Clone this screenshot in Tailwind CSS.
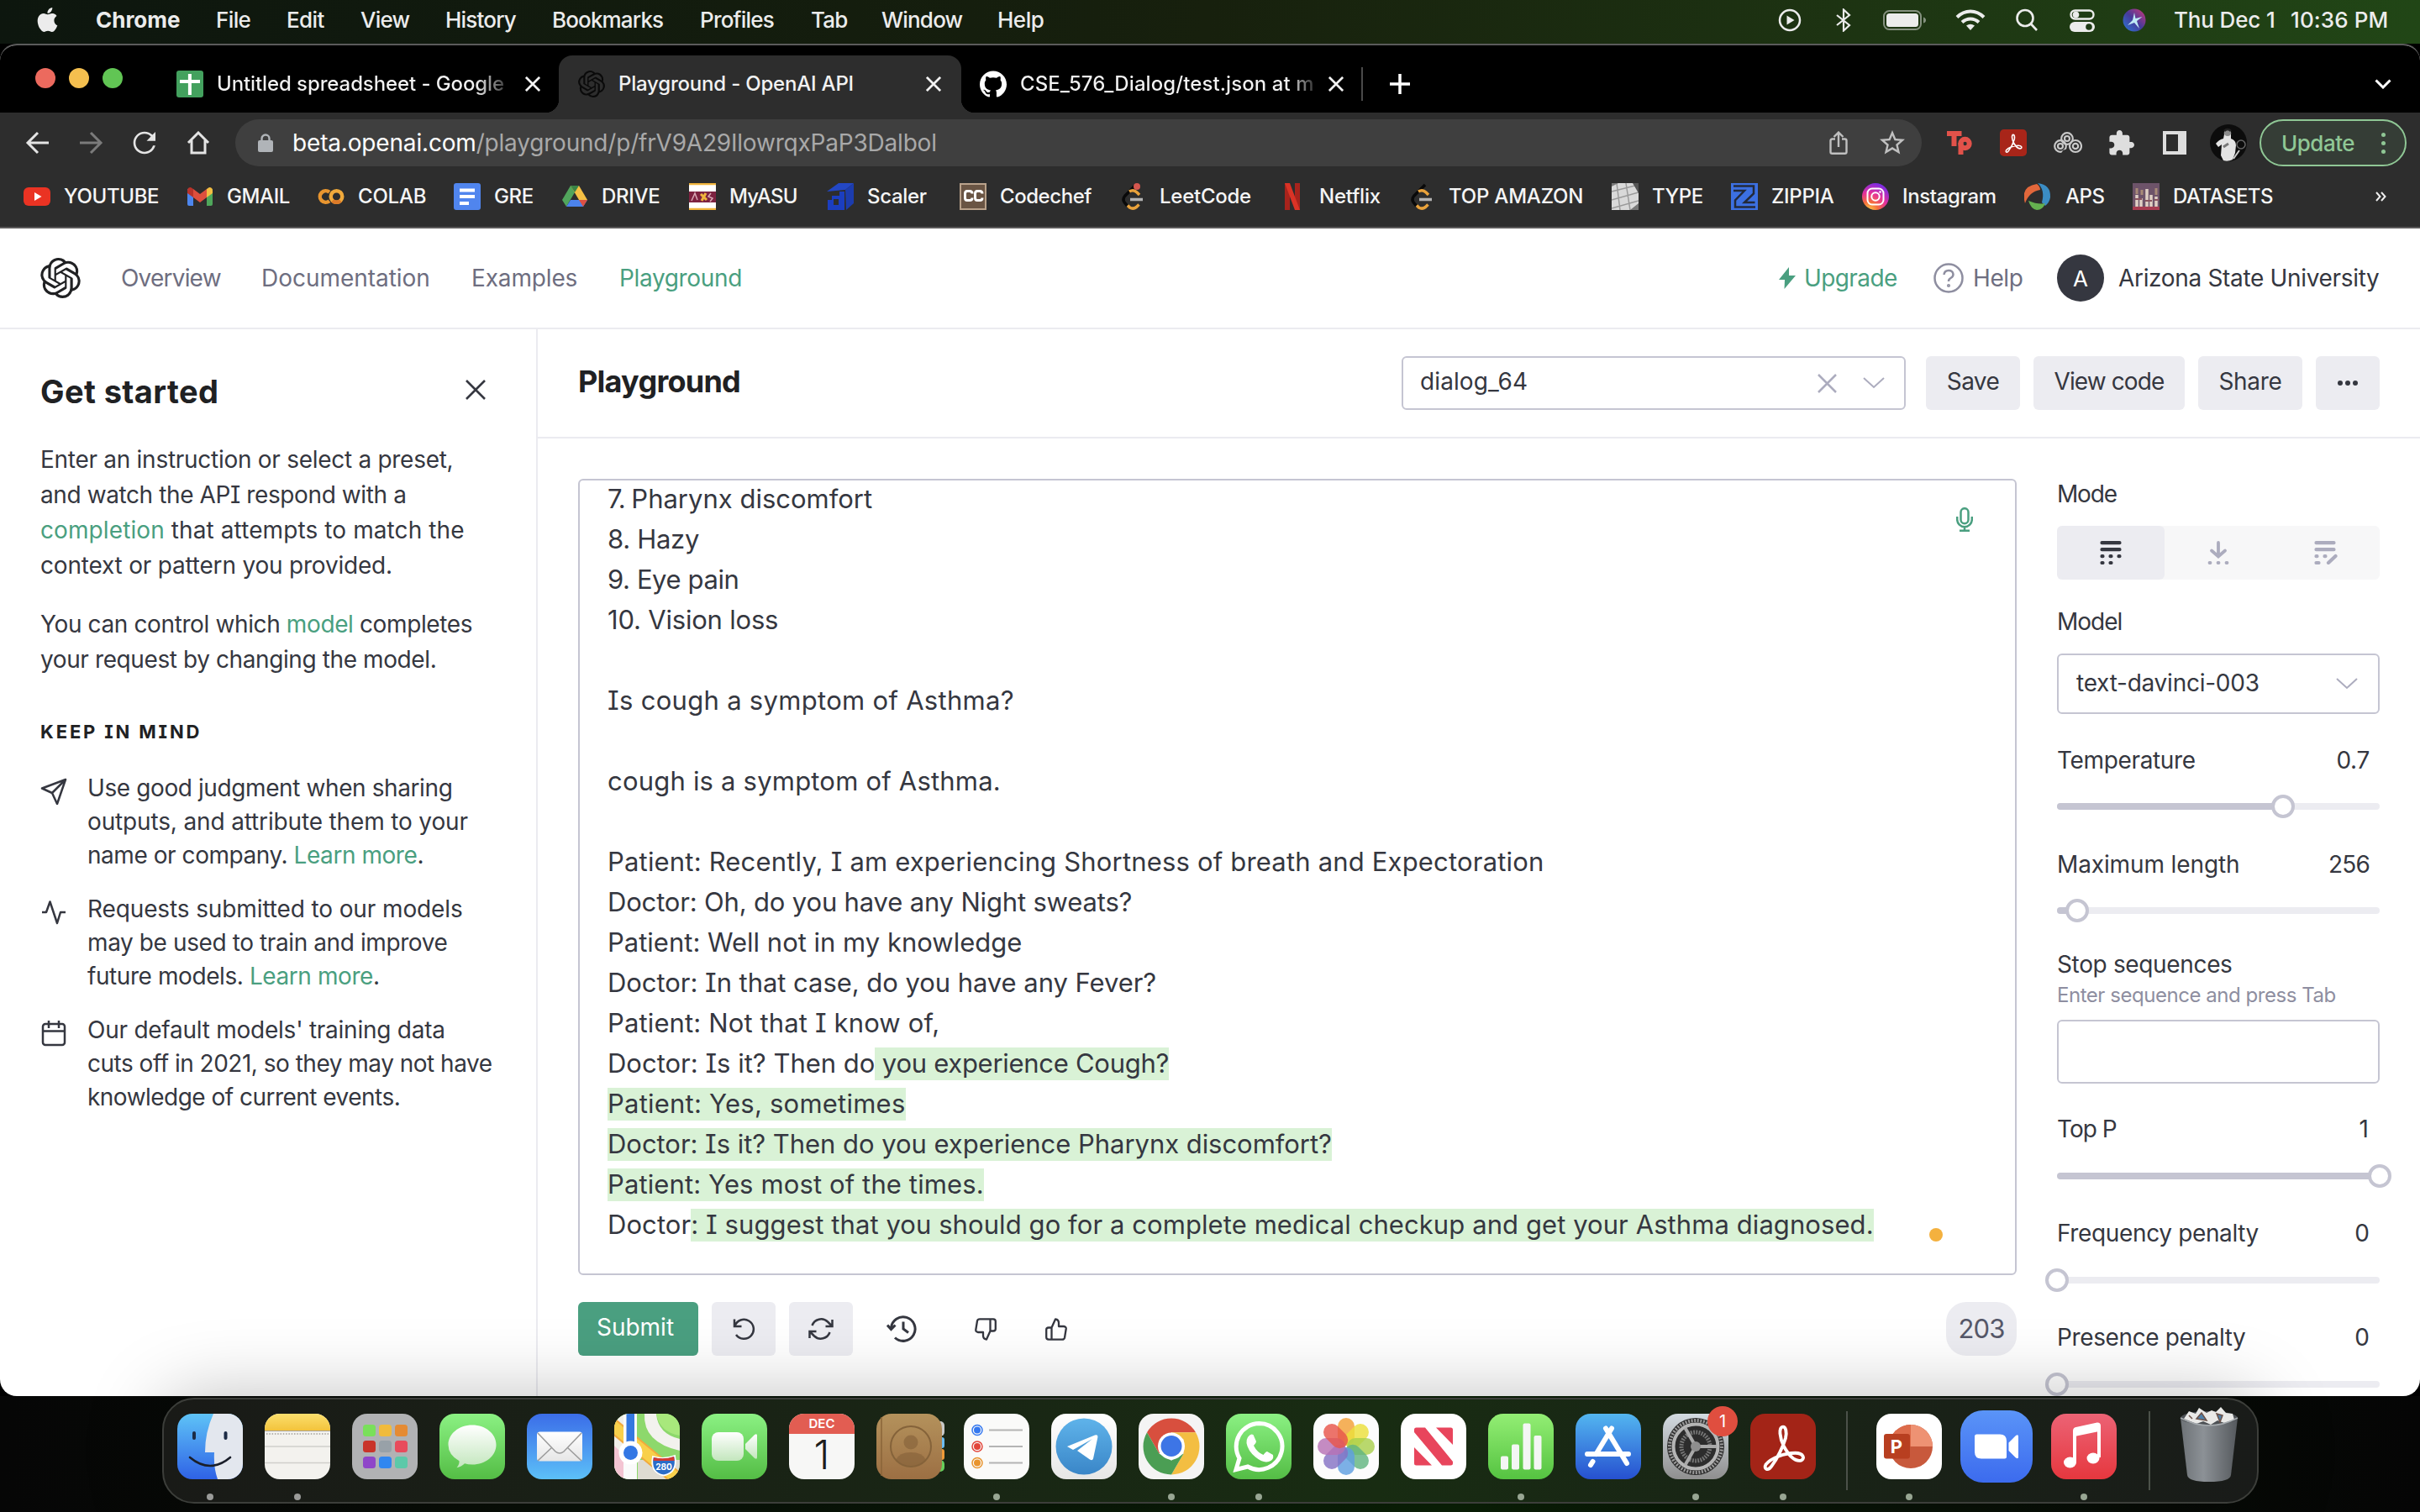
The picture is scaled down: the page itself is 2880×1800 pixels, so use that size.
<!DOCTYPE html>
<html lang="en">
<head>
<meta charset="utf-8">
<title>Playground - OpenAI API</title>
<script src="https://cdn.jsdelivr.net/npm/@tailwindcss/browser@4"></script>
<style>
/* upper-case i with serifs */
.serif-i { font-feature-settings: "cv08" 1; }
</style>
</head>
<body class="flex h-[1800px] w-[2880px] flex-col overflow-hidden bg-black font-['Inter',sans-serif] antialiased">

<!-- shared symbols -->
<svg class="hidden">
  <symbol id="openai" viewBox="0 0 24 24"><path d="M22.2819 9.8211a5.9847 5.9847 0 0 0-.5157-4.9108 6.0462 6.0462 0 0 0-6.5098-2.9A6.0651 6.0651 0 0 0 4.9807 4.1818a5.9847 5.9847 0 0 0-3.9977 2.9 6.0462 6.0462 0 0 0 .7427 7.0966 5.98 5.98 0 0 0 .511 4.9107 6.051 6.051 0 0 0 6.5146 2.9001A5.9847 5.9847 0 0 0 13.2599 24a6.0557 6.0557 0 0 0 5.7718-4.2058 5.9894 5.9894 0 0 0 3.9977-2.9001 6.0557 6.0557 0 0 0-.7475-7.0729zm-9.022 12.6081a4.4755 4.4755 0 0 1-2.8764-1.0408l.1419-.0804 4.7783-2.7582a.7948.7948 0 0 0 .3927-.6813v-6.7369l2.02 1.1686a.071.071 0 0 1 .038.052v5.5826a4.504 4.504 0 0 1-4.4945 4.4944zm-9.6607-4.1254a4.4708 4.4708 0 0 1-.5346-3.0137l.142.0852 4.783 2.7582a.7712.7712 0 0 0 .7806 0l5.8428-3.3685v2.3324a.0804.0804 0 0 1-.0332.0615L9.74 19.9502a4.4992 4.4992 0 0 1-6.1408-1.6464zM2.3408 7.8956a4.485 4.485 0 0 1 2.3655-1.9728V11.6a.7664.7664 0 0 0 .3879.6765l5.8144 3.3543-2.0201 1.1685a.0757.0757 0 0 1-.071 0l-4.8303-2.7865A4.504 4.504 0 0 1 2.3408 7.872zm16.5963 3.8558L13.1038 8.364 15.1192 7.2a.0757.0757 0 0 1 .071 0l4.8303 2.7913a4.4944 4.4944 0 0 1-.6765 8.1042v-5.6772a.79.79 0 0 0-.407-.667zm2.0107-3.0231l-.142-.0852-4.7735-2.7818a.7759.7759 0 0 0-.7854 0L9.409 9.2297V6.8974a.0662.0662 0 0 1 .0284-.0615l4.8303-2.7866a4.4992 4.4992 0 0 1 6.6802 4.66zM8.3065 12.863l-2.02-1.1638a.0804.0804 0 0 1-.038-.0567V6.0742a4.4992 4.4992 0 0 1 7.3757-3.4537l-.142.0805L8.704 5.459a.7948.7948 0 0 0-.3927.6813zm1.0976-2.3654l2.602-1.4998 2.6069 1.4998v2.9994l-2.5974 1.4997-2.6067-1.4997Z"/></symbol>
  <symbol id="x" viewBox="0 0 20 20"><path d="M1 1l18 18M19 1L1 19" fill="none" stroke="currentColor" stroke-width="3"/></symbol>
  <symbol id="down" viewBox="0 0 26 14"><path d="M1 1l12 11L25 1" fill="none" stroke="currentColor" stroke-width="2"/></symbol>
  <symbol id="leet" viewBox="0 0 32 32"><path d="M20 2L6.500 15.500q-3 4 0 8l3 3.500" fill="none" stroke="#090909" stroke-width="3.500"/><path d="M10 26.500l2.500 2.500q4 2.500 8-.5l3-3M12 10q5-3 9 1l3 3" fill="none" stroke="#e9a23b" stroke-width="3.500"/><path d="M13 19.500h15" stroke="#b3b3b3" stroke-width="3.500"/></symbol>
  <symbol id="acro" viewBox="0 0 80 80"><path d="M40 16c-6 0-4 14 1 24 5 9 13 19 21 17 5-2 3-9-7-9-13 0-30 6-36 14-3 5 2 9 7 2 7-9 14-24 17-34 2-8 0-14-3-14z" fill="none" stroke="#fff" stroke-width="4"/></symbol>
</svg>

<!-- macOS menu bar -->
<header class="flex h-[52px] shrink-0 items-center bg-linear-to-r from-[#0d160e] via-[#17200d] via-50% to-[#214616] pb-[5px] text-[26px] font-medium text-[#ececec]">
  <svg class="ml-[42px] mr-[43px] h-[31px] w-[29px] shrink-0" viewBox="0 0 24 24" fill="#ececec"><path d="M12.152 6.896c-.948 0-2.415-1.078-3.96-1.04-2.04.027-3.91 1.183-4.961 3.014-2.117 3.675-.546 9.103 1.519 12.09 1.013 1.454 2.208 3.09 3.792 3.039 1.52-.065 2.09-.987 3.935-.987 1.831 0 2.35.987 3.96.948 1.637-.026 2.676-1.48 3.676-2.948 1.156-1.688 1.636-3.325 1.662-3.415-.039-.013-3.182-1.221-3.22-4.857-.026-3.04 2.48-4.494 2.597-4.559-1.429-2.09-3.623-2.324-4.39-2.376-2-.156-3.675 1.09-4.61 1.09zM15.53 3.83c.843-1.012 1.4-2.427 1.245-3.83-1.207.052-2.662.805-3.532 1.818-.78.896-1.454 2.338-1.273 3.714 1.338.104 2.715-.688 3.559-1.701"/></svg>
  <span class="w-[143px] font-bold">Chrome</span>
  <span class="w-[84px] tracking-[-0.6px]">File</span>
  <span class="w-[88px] tracking-[-0.6px]">Edit</span>
  <span class="w-[101px] tracking-[-0.8px]">View</span>
  <span class="w-[127px] tracking-[-0.8px]">History</span>
  <span class="w-[176px] tracking-[-0.85px]">Bookmarks</span>
  <span class="w-[132px] tracking-[-0.8px]">Profiles</span>
  <span class="w-[84px] tracking-[-0.8px]">Tab</span>
  <span class="w-[138px] tracking-[-0.8px]">Window</span>
  <span class="tracking-[-0.5px]">Help</span>
  <div class="ml-auto flex items-center">
    <svg class="h-7 w-7" viewBox="0 0 28 28" fill="none" stroke="#ececec" stroke-width="2.500"><circle cx="14" cy="14" r="12"/><path d="M10.500 8.500v11l9-5.500z" fill="#ececec" stroke="none"/></svg>
    <svg class="ml-[40px] h-7 w-5" viewBox="0 0 20 28" fill="none" stroke="#ececec" stroke-width="2.200"><path d="M2 8l15 12-7 6.500v-25l7 6.500L2 20"/></svg>
    <svg class="ml-[37px] h-6 w-[52px]" viewBox="0 0 52 24"><rect x="1" y="1" width="44" height="22" rx="6.500" fill="none" stroke="#ececec" stroke-opacity=".5" stroke-width="2"/><rect x="4" y="4" width="38" height="16" rx="3.500" fill="#ececec"/><path d="M48 8.500q3 1 3 3.500t-3 3.500z" fill="#ececec" fill-opacity=".5"/></svg>
    <svg class="ml-[34px] h-[26px] w-9" viewBox="0 0 36 26" fill="none" stroke="#ececec" stroke-width="4"><path d="M2 9.500q7-7 16-7t16 7M8 15.500q4.500-4 10-4t10 4"/><path d="M18 25l-5-5.500q5-3.500 10 0z" fill="#ececec" stroke="none"/></svg>
    <svg class="ml-[35px] h-7 w-7" viewBox="0 0 28 28" fill="none" stroke="#ececec" stroke-width="2.600"><circle cx="12" cy="11.500" r="9.500"/><path d="M19 18.500l7 7.500"/></svg>
    <svg class="ml-[37px] h-7 w-[30px]" viewBox="0 0 30 28"><rect x="1.500" y="2.500" width="27" height="10" rx="5" fill="none" stroke="#ececec" stroke-width="2.400"/><circle cx="7.500" cy="7.500" r="3.800" fill="#ececec"/><rect x="0" y="16" width="30" height="12" rx="6" fill="#ececec"/><circle cx="23" cy="22" r="3.800" fill="#1e3a15"/></svg>
    <svg class="ml-[33px] h-7 w-7" viewBox="0 0 28 28"><defs><linearGradient id="siri" x1="0" y1="1" x2="1" y2="0"><stop offset="0" stop-color="#2c7bd8"/><stop offset=".5" stop-color="#463a9a"/><stop offset="1" stop-color="#d0387a"/></linearGradient></defs><circle cx="14" cy="14" r="13.500" fill="url(#siri)"/><path d="M14 5l1.500 7 8-2-6.500 5 3 9-6-7-8 3 6-6z" fill="#bfe9f5"/></svg>
    <span class="ml-[33px] w-[139px] tracking-[-0.15px]">Thu Dec 1</span>
    <span class="w-[154px] tracking-[0.1px]">10:36 PM</span>
  </div>
</header>

<!-- Chrome window -->
<div class="flex h-[1610px] w-full shrink-0 flex-col overflow-hidden rounded-[20px] border-t-2 border-[#5b5b5b] bg-white">

  <!-- tab strip -->
  <div class="flex h-[80px] shrink-0 items-end bg-black text-[24px] font-medium text-[#f2f2f2]">
    <div class="flex h-[68px] w-[665px] items-center pl-[42px]">
      <div class="-mt-[14px] flex gap-4"><i class="size-6 rounded-full bg-[#ec6a5e]"></i><i class="size-6 rounded-full bg-[#f4bf4f]"></i><i class="size-6 rounded-full bg-[#61c554]"></i></div>
      <svg class="ml-[64px] size-8" viewBox="0 0 32 32"><rect width="32" height="32" rx="3" fill="#43a15e"/><path d="M15.900 4v25M4 13h24" stroke="#fff" stroke-width="4"/></svg>
      <span class="ml-4 w-[350px] overflow-hidden whitespace-nowrap bg-linear-to-r from-[#f2f2f2] from-88% to-[#f2f2f2]/10 to-100% bg-clip-text tracking-[-0.1px] text-transparent">Untitled spreadsheet - Google</span>
      <svg class="ml-[17px] size-[18px]"><use href="#x"/></svg>
    </div>
    <div class="relative flex h-[68px] w-[479px] items-center rounded-t-[16px] bg-[#2d2d2d] pl-[23px]">
      <i class="absolute bottom-0 -left-4 size-4 bg-[radial-gradient(circle_at_0_0,black_16px,#2d2d2d_16.5px)]"></i>
      <i class="absolute -right-4 bottom-0 size-4 bg-[radial-gradient(circle_at_100%_0,black_16px,#2d2d2d_16.5px)]"></i>
      <svg class="size-8" fill="#0a0a0a"><use href="#openai"/></svg>
      <span class="ml-4 w-[366px] tracking-[-0.2px]">Playground - OpenAI API</span>
      <svg class="size-[18px]"><use href="#x"/></svg>
    </div>
    <div class="flex h-[68px] flex-1 items-center pl-[22px]">
      <svg class="size-8" viewBox="0 0 24 24" fill="#fff"><path d="M12 .297c-6.63 0-12 5.373-12 12 0 5.303 3.438 9.8 8.205 11.385.6.113.82-.258.82-.577 0-.285-.01-1.04-.015-2.04-3.338.724-4.042-1.61-4.042-1.61C4.422 18.07 3.633 17.7 3.633 17.7c-1.087-.744.084-.729.084-.729 1.205.084 1.838 1.236 1.838 1.236 1.07 1.835 2.809 1.305 3.495.998.108-.776.417-1.305.76-1.605-2.665-.3-5.466-1.332-5.466-5.93 0-1.31.465-2.38 1.235-3.22-.135-.303-.54-1.523.105-3.176 0 0 1.005-.322 3.3 1.23.96-.267 1.98-.399 3-.405 1.02.006 2.04.138 3 .405 2.28-1.552 3.285-1.23 3.285-1.23.645 1.653.24 2.873.12 3.176.765.84 1.23 1.91 1.23 3.22 0 4.61-2.805 5.625-5.475 5.92.42.36.81 1.096.81 2.22 0 1.606-.015 2.896-.015 3.286 0 .315.21.69.825.57C20.565 22.092 24 17.592 24 12.297c0-6.627-5.373-12-12-12"/></svg>
      <span class="ml-4 w-[350px] overflow-hidden whitespace-nowrap bg-linear-to-r from-[#f2f2f2] from-91% to-[#f2f2f2]/20 to-100% bg-clip-text tracking-[0.08px] text-transparent">CSE_576_Dialog/test.json at m</span>
      <svg class="ml-[17px] size-[18px]"><use href="#x"/></svg>
      <i class="ml-[21px] h-10 w-[2px] bg-[#4a4a4a]"></i>
      <svg class="ml-8 size-6" viewBox="0 0 24 24" stroke="#fff" stroke-width="3.500"><path d="M12 0v24M0 12h24"/></svg>
      <svg class="ml-auto mr-[34px] h-3 w-5" viewBox="0 0 20 12" fill="none" stroke="#fff" stroke-width="3"><path d="M1.500 1.500L10 10l8.500-8.500"/></svg>
    </div>
  </div>

  <!-- toolbar -->
  <div class="flex h-[72px] shrink-0 items-center bg-[#2d2d2d] text-[28px]">
    <svg class="ml-[30px] h-7 w-7" viewBox="0 0 28 28" fill="none" stroke="#e4e4e4" stroke-width="3"><path d="M28 14H3M15 2L3 14l12 12"/></svg>
    <svg class="ml-[37px] h-7 w-7" viewBox="0 0 28 28" fill="none" stroke="#7b7b7b" stroke-width="3"><path d="M0 14h25M13 2l12 12-12 12"/></svg>
    <svg class="ml-[29px] size-10" viewBox="0 0 24 24" fill="#e4e4e4"><path d="M17.650 6.350C16.200 4.900 14.210 4 12 4c-4.420 0-7.990 3.580-7.990 8s3.570 8 7.990 8c3.730 0 6.840-2.550 7.730-6h-1.700c-.82 2.700-3.240 4.400-6.030 4.400-3.500 0-6.400-2.850-6.400-6.400s2.900-6.400 6.400-6.400c1.760 0 3.340.75 4.520 1.900L13.500 10.600h6.300V4.200l-2.150 2.150z"/></svg>
    <svg class="ml-[30px] h-7 w-7" viewBox="0 0 28 28" fill="none" stroke="#e4e4e4" stroke-width="3"><path d="M2 14L14 2l12 12M6 11v15h16V11"/></svg>
    <div class="ml-[30px] flex h-14 w-[2007px] items-center rounded-full bg-[#3f3f3f]">
      <svg class="ml-[27px] h-[22px] w-[18px]" viewBox="0 0 18 22"><path d="M4.500 9V6a4.500 4.500 0 0 1 9 0v3" fill="none" stroke="#b0b4b8" stroke-width="2.400"/><rect y="8" width="18" height="14" rx="2" fill="#b0b4b8"/></svg>
      <span class="ml-[23px] tracking-[-0.17px] text-white">beta.openai.com</span><span class="tracking-[-0.2px] text-[#a9a9a9]">/playground/p/frV9A29IlowrqxPaP3Dalbol</span>
      <svg class="ml-auto h-7 w-[22px]" viewBox="0 0 22 28" fill="none" stroke="#c0c0c0" stroke-width="2.400"><path d="M7 9.500H3.500q-2 0-2 2V25q0 1.800 2 1.800h15q2 0 2-1.800V11.500q0-2-2-2H15M11 19V2M5.500 7L11 1.600 16.500 7"/></svg>
      <svg class="ml-[35px] mr-[17px] size-[36px]" viewBox="0 0 24 24" fill="#c0c0c0"><path d="M22 9.240l-7.190-.62L12 2 9.190 8.630 2 9.240l5.460 4.730L5.820 21 12 17.270 18.180 21l-1.630-7.030L22 9.240zM12 15.400l-3.760 2.270 1-4.280-3.320-2.880 4.380-.38L12 6.100l1.710 4.040 4.380.38-3.320 2.880 1 4.280L12 15.400z"/></svg>
    </div>
    <svg class="ml-[30px] h-7 w-[30px]" viewBox="0 0 30 28" fill="none" stroke="#e2524a"><path d="M0 3h17.500M8.500 0v18" stroke-width="6"/><path d="M16.500 28V14" stroke-width="6"/><circle cx="21.500" cy="15" r="5.200" stroke-width="6"/></svg>
    <svg class="ml-[33px] size-8" viewBox="0 0 80 80"><rect width="80" height="80" rx="12" fill="#a82519"/><use href="#acro"/></svg>
    <svg class="ml-8 h-[26px] w-[34px]" viewBox="0 0 34 26" fill="none" stroke="#c9c9c9" stroke-width="2.200"><circle cx="16" cy="8" r="6.800"/><circle cx="16" cy="8" r="3"/><g clip-path="url(#rings)"><circle cx="8" cy="17" r="6.800"/><circle cx="8" cy="17" r="3"/></g><circle cx="26" cy="17" r="7"/><circle cx="26" cy="17" r="3.200"/></svg>
    <svg class="ml-[31px] size-[31px]" viewBox="1 1 22 22" fill="#dedede"><path d="M20.500 11H19V7c0-1.100-.9-2-2-2h-4V3.500C13 2.120 11.880 1 10.500 1S8 2.120 8 3.500V5H4c-1.100 0-1.990.9-1.990 2v3.800H3.500c1.490 0 2.700 1.210 2.700 2.700s-1.210 2.700-2.700 2.700H2V20c0 1.100.9 2 2 2h3.800v-1.500c0-1.490 1.210-2.700 2.700-2.700 1.490 0 2.700 1.210 2.700 2.700V22H17c1.100 0 2-.9 2-2v-4h1.500c1.380 0 2.500-1.120 2.500-2.500S21.880 11 20.500 11z"/></svg>
    <i class="ml-[34px] size-7 border-4 border-r-[10px] border-[#dedede]"></i>
    <svg class="ml-7 size-11" viewBox="0 0 44 44"><circle cx="22" cy="22" r="22" fill="#0c0c0c"/><path d="M7 23q4-5 9-6l1-5q-1-6 4-6t4 6v5q6 2 6 8l-1 9-3 8q-6 3-11 1l-3-6 1-13-4 3z" fill="#e3e3e3"/><circle cx="21" cy="10" r="4" fill="#8b8b8b"/><path d="M17 8q4-4 8 0" stroke="#222" stroke-width="2.500" fill="none"/><path d="M16 27l6-4" stroke="#777" stroke-width="3"/><circle cx="37" cy="24" r="5" fill="none" stroke="#666" stroke-width="1.500"/><path d="M35 31l-7 10" stroke="#ccc" stroke-width="2"/></svg>
    <div class="ml-[15px] flex h-14 w-[175px] items-center rounded-full border-[2.500px] border-[#8fc795] bg-[#353d36] pl-[24px] text-[26px] font-medium tracking-[-0.5px] text-[#8fc795]">Update
      <span class="ml-auto mr-[23px] flex flex-col gap-[5px]"><i class="size-[5px] rounded-full bg-[#8fc795]"></i><i class="size-[5px] rounded-full bg-[#8fc795]"></i><i class="size-[5px] rounded-full bg-[#8fc795]"></i></span>
    </div>
  </div>

  <!-- bookmarks bar -->
  <div class="flex h-[66px] shrink-0 items-center whitespace-nowrap border-b-2 border-[#5b595a] bg-[#2d2d2d] pb-2 pl-7 text-[24px] font-medium text-[#f5f5f5]">
    <div class="flex w-[194px] items-center gap-4"><svg class="size-8" viewBox="0 0 32 32"><rect y="5" width="32" height="22" rx="6" fill="#ea3323"/><path d="M13 11v10l8.500-5z" fill="#fff"/></svg><span class="tracking-[-0.35px]">YOUTUBE</span></div>
    <div class="flex w-[156px] items-center gap-4"><svg class="size-8" viewBox="0 0 32 32"><path d="M1 7h7v20H3q-2 0-2-2z" fill="#4d86ee"/><path d="M24 7h7v18q0 2-2 2h-5z" fill="#4fa75b"/><path d="M24 7l3-2q4 0 4 4v3l-7 5z" fill="#f3bd42"/><path d="M1 9q0-4 4-4l3 2v10l-7-5z" fill="#b8332a"/><path d="M8 7l8 6 8-6v10l-8 6-8-6z" fill="#dd4f3e"/></svg><span class="tracking-[-0.4px]">GMAIL</span></div>
    <div class="flex w-[162px] items-center gap-4"><svg class="size-8" viewBox="0 0 32 32" fill="none" stroke-width="4.500"><path d="M14 10.800a6.800 6.800 0 1 0 0 10.400" stroke="#e8952f"/><circle cx="22.500" cy="16" r="6.800" stroke="#f0a93b"/><path d="M17.700 20.800a6.800 6.800 0 0 0 9.600 0" stroke="#dd7a28"/></svg><span class="tracking-[-0.2px]">COLAB</span></div>
    <div class="flex w-[128px] items-center gap-4"><svg class="size-8" viewBox="0 0 32 32"><rect width="32" height="32" rx="3" fill="#5085ee"/><path d="M7 8.500h18M7 16h18M7 24h11" stroke="#fff" stroke-width="4"/></svg><span class="tracking-[-0.32px]">GRE</span></div>
    <div class="flex w-[152px] items-center gap-4"><svg class="size-8" viewBox="0 0 32 32"><path d="M11 3L1 20l5 8 10-17z" fill="#51a55c"/><path d="M11 3h10l10 17H21z" fill="#f5c044"/><path d="M11 3h10l-5 8z" fill="#3a8446"/><path d="M6 28l5-8h20l-5 8z" fill="#4c83ec"/><path d="M21 20h10l-5 8z" fill="#dd5043"/></svg><span class="tracking-[-0.3px]">DRIVE</span></div>
    <div class="flex w-[164px] items-center gap-4"><svg class="size-8" viewBox="0 0 32 32"><rect width="32" height="32" fill="#fff"/><path d="M0 1h32M0 31h32" stroke="#f0b43c" stroke-width="2.500"/><rect y="10" width="32" height="13" fill="#7d2240"/><path d="M3 21l4-9 3 8M26 12l-3 4 5 2-3 4" fill="none" stroke="#d8a8b5" stroke-width="1.500"/><path d="M14 13l7 7M20 12l-5 9" stroke="#f0b43c" stroke-width="3"/></svg><span class="tracking-[-0.7px]">MyASU</span></div>
    <div class="flex w-[158px] items-center gap-4"><svg class="size-8" viewBox="0 0 32 32"><path d="M0 10L14 0h18L22 8z" fill="#2347c4"/><path d="M22 8L32 0v24l-9 8z" fill="#1c3cae"/><path d="M1 10h20v22H1z" fill="#1b3ec0"/><path d="M1 10h14v5H6v5H1z" fill="#2d2d2d"/><path d="M8 19h6v7H8z" fill="#2d2d2d"/></svg><span class="tracking-[-0.3px]">Scaler</span></div>
    <div class="flex w-[190px] items-center gap-4"><svg class="size-8" viewBox="0 0 32 32"><rect x="1" y="1" width="30" height="30" fill="#6a5544" stroke="#b9a28b" stroke-width="2"/><path d="M15 12.500q0-3-3-3H9q-2.500 0-2.500 3v5q0 3 2.500 3h3q3 0 3-3M27 12.500q0-3-3-3h-3q-2.500 0-2.500 3v5q0 3 2.500 3h3q3 0 3-3" fill="none" stroke="#fff" stroke-width="3"/></svg><span class="tracking-[-0.44px]">Codechef</span></div>
    <div class="flex w-[190px] items-center gap-4"><svg class="size-8" viewBox="0 0 32 32"><use href="#leet"/><circle cx="21" cy="4" r="4" fill="#d4574f"/></svg><span class="tracking-[-0.25px]">LeetCode</span></div>
    <div class="flex w-[154px] items-center gap-4"><svg class="size-8" viewBox="0 0 32 32"><path d="M7 0h6v32H7zM19 0h6v32h-6z" fill="#a8231c"/><path d="M7 0h6l12 32h-6z" fill="#da3326"/></svg><span class="tracking-[-0.2px]">Netflix</span></div>
    <div class="flex w-[242px] items-center gap-4"><svg class="size-8"><use href="#leet"/></svg><span class="tracking-[-0.2px]">TOP AMAZON</span></div>
    <div class="flex w-[142px] items-center gap-4"><svg class="size-8" viewBox="0 0 32 32"><rect width="32" height="32" fill="#d9d9d9"/><path d="M0 10L32 2M0 20l32-9M0 30l32-9M6 0l4 32M17 0l5 32" stroke="#9a9a9a" stroke-width="1.500"/><path d="M25 0h7v12z" fill="#555"/><path d="M0 4L8 0H0zM22 32l10-8v8z" fill="#777"/></svg><span class="tracking-[-0.5px]">TYPE</span></div>
    <div class="flex w-[156px] items-center gap-4"><svg class="size-8" viewBox="0 0 32 32"><rect width="32" height="32" fill="#3c70e2"/><path d="M3 3.500h24v9L16 23h12.500M29 28.500H5v-8L16 9H3" fill="none" stroke="#232a3a" stroke-width="2.500"/></svg><span class="tracking-[-0.3px]">ZIPPIA</span></div>
    <div class="flex w-[193px] items-center gap-4"><svg class="size-8" viewBox="0 0 32 32"><defs><radialGradient id="ig" cx=".25" cy="1.050" r="1.150"><stop offset="0" stop-color="#fbd84e"/><stop offset=".3" stop-color="#f5703b"/><stop offset=".6" stop-color="#e5309a"/><stop offset="1" stop-color="#6a2cf0"/></radialGradient></defs><circle cx="16" cy="16" r="16" fill="url(#ig)"/><g fill="none" stroke="#fff" stroke-width="2"><rect x="6.500" y="6.500" width="19" height="19" rx="5.500"/><circle cx="16" cy="16" r="4.700"/></g><circle cx="21.500" cy="10.500" r="1.300" fill="#fff"/></svg><span class="tracking-[-0.35px]">Instagram</span></div>
    <div class="flex w-[129px] items-center gap-[17px]"><svg class="size-8" viewBox="0 0 32 32"><path d="M1 24Q-5 4 15 1q4 3 4 7Q6 10 1 24z" fill="#e2673b"/><path d="M16 0q16 2 15 17-1 6-6 10l-4-4Q25 8 16 0z" fill="#3b8dc4"/><path d="M5 21q12 5 20 3-3 8-10 8-7-1-10-11z" fill="#65b04f"/></svg><span class="tracking-[-0.5px]">APS</span></div>
    <div class="flex items-center gap-4"><svg class="size-8" viewBox="0 0 32 32"><rect width="32" height="32" fill="#6d5369"/><path d="M0 28h32v4H0z" fill="#a83c52"/><path d="M5 14v14M10 18v10M17 7v21M22 14v14M28 16v12" stroke="#e0cfc4" stroke-width="3.500"/><path d="M5 6v7M28 6v8M11 8v6" stroke="#a88a78" stroke-width="3"/><path d="M3 19h8M15 21h8M26 20h5" stroke="#89545f" stroke-width="2"/></svg><span class="tracking-[-0.5px]">DATASETS</span></div>
    <svg class="ml-auto mr-[40px] h-3 w-[13px]" viewBox="0 0 13 12" fill="none" stroke="#eee" stroke-width="2"><path d="M1 1l4.500 5L1 11M7 1l4.500 5L7 11"/></svg>
  </div>

  <!-- site header -->
  <nav class="flex h-[120px] shrink-0 items-center border-b-2 border-[#ebebf0] pl-12 text-[28px] text-[#6e6e80]">
    <svg class="mr-[48px] size-[48px] text-[#202123]" fill="currentColor"><use href="#openai"/></svg>
    <span class="w-[167px] tracking-[-0.8px]">Overview</span>
    <span class="w-[250px] tracking-[-0.03px]">Documentation</span>
    <span class="w-[176px] tracking-[-0.15px]">Examples</span>
    <span class="tracking-[-0.35px] text-[#4a9f80]">Playground</span>
    <div class="ml-auto flex items-center">
      <svg class="h-[26px] w-5" viewBox="0 0 20 26" fill="#4a9f80"><path d="M12 0L0 15h7L6.500 26 20 10h-8z"/></svg>
      <span class="ml-[10px] w-[154px] tracking-[-0.6px] text-[#4a9f80]">Upgrade</span>
      <svg class="size-9" viewBox="0 0 36 36" fill="none" stroke="#8e8ea0" stroke-width="2.500"><circle cx="18" cy="18" r="16.500"/><path d="M12.500 14q.5-5 5.500-5t5.500 4.500q0 3-3 4.500-2.500 1.200-2.500 4"/><circle cx="18" cy="27" r=".8"/></svg>
      <span class="ml-[11px] w-[100px] tracking-[-0.4px]">Help</span>
      <span class="flex size-14 items-center justify-center rounded-full bg-[#353740] text-[26px] text-white">A</span>
      <span class="ml-[17px] w-[359px] tracking-[-0.33px] text-[#353740]">Arizona State University</span>
    </div>
  </nav>

  <div class="serif-i flex min-h-0 flex-1 text-[#353740]">
    <!-- get started -->
    <aside class="w-[640px] shrink-0 border-r-2 border-[#ebebf0] pl-12 pt-[50px] text-[28px]">
      <div class="flex h-12 items-center justify-between pr-[60px]">
        <h2 class="text-[38px] font-bold tracking-[0.4px] text-[#202123]">Get started</h2>
        <svg class="-mt-1 size-6" viewBox="0 0 24 24" stroke="#353740" stroke-width="2.600"><path d="M1 1l22 22M23 1L1 23"/></svg>
      </div>
      <p class="mt-9 whitespace-nowrap leading-[42px]">
        <span class="block tracking-[-0.28px]">Enter an instruction or select a preset,</span>
        <span class="block tracking-[-0.4px]">and watch the API respond with a</span>
        <span class="block tracking-[0.1px]"><a class="text-[#4a9f80]">completion</a> that attempts to match the</span>
        <span class="block tracking-[-0.2px]">context or pattern you provided.</span>
      </p>
      <p class="mt-7 whitespace-nowrap leading-[42px]">
        <span class="block tracking-[-0.38px]">You can control which <a class="text-[#4a9f80]">model</a> completes</span>
        <span class="block tracking-[-0.4px]">your request by changing the model.</span>
      </p>
      <h3 class="mt-[49px] text-[22px] font-bold leading-8 tracking-[2.850px] text-[#202123]">KEEP IN MIND</h3>
      <ul class="mt-[31px] flex flex-col gap-6 whitespace-nowrap leading-10">
        <li class="flex gap-6">
          <svg class="mt-2 size-8" viewBox="0 0 32 32" fill="none" stroke="#353740" stroke-width="2.500" stroke-linejoin="round"><path d="M30 2L2 12.500 14 18l6 13zM30 2L14 18"/></svg>
          <p><span class="block tracking-[-0.4px]">Use good judgment when sharing</span><span class="block tracking-[-0.15px]">outputs, and attribute them to your</span><span class="block tracking-[-0.45px]">name or company. <a class="text-[#4a9f80]">Learn more</a>.</span></p>
        </li>
        <li class="flex gap-6">
          <svg class="mt-2 size-8" viewBox="0 0 32 32" fill="none" stroke="#353740" stroke-width="2.500" stroke-linejoin="round"><path d="M2 16h5l4.500-12.500L20 29l4-13h6"/></svg>
          <p><span class="block tracking-[-0.12px]">Requests submitted to our models</span><span class="block tracking-[-0.4px]">may be used to train and improve</span><span class="block tracking-[-0.42px]">future models. <a class="text-[#4a9f80]">Learn more</a>.</span></p>
        </li>
        <li class="flex gap-6">
          <svg class="mt-2 size-8" viewBox="0 0 32 32" fill="none" stroke="#353740" stroke-width="2.500" stroke-linejoin="round"><rect x="3" y="5" width="26" height="25" rx="3"/><path d="M3 13.500h26M10 1v9M22 1v9"/></svg>
          <p><span class="block tracking-[-0.25px]">Our default models' training data</span><span class="block tracking-[-0.5px]">cuts off in 2021, so they may not have</span><span class="block tracking-[-0.52px]">knowledge of current events.</span></p>
        </li>
      </ul>
    </aside>

    <main class="flex min-w-0 flex-1 flex-col">
      <div class="flex h-[130px] shrink-0 items-center border-b-2 border-[#ebebf0] pl-12 pr-12 text-[28px]">
        <h1 class="-mt-1 text-[36px] font-bold tracking-[-0.75px] text-[#202123]">Playground</h1>
        <div class="ml-auto flex h-16 w-[600px] items-center rounded-md border-2 border-[#c5c5d2] pl-[20px] pr-[23px]">
          <span class="-mt-1 tracking-[0.1px]">dialog_64</span>
          <svg class="ml-auto size-[23px]" viewBox="0 0 23 23" stroke="#acacbe" stroke-width="2.500"><path d="M1 1l21 21M22 1L1 22"/></svg>
          <svg class="ml-[31px] h-[14px] w-[26px] text-[#acacbe]"><use href="#down"/></svg>
        </div>
        <button class="ml-6 h-16 w-[112px] rounded-md bg-[#ececf1] pb-1 tracking-[-0.6px]">Save</button>
        <button class="ml-4 h-16 w-[180px] rounded-md bg-[#ececf1] pb-1 tracking-[-0.9px]">View code</button>
        <button class="ml-4 h-16 w-[124px] rounded-md bg-[#ececf1] pb-1 tracking-[-0.3px]">Share</button>
        <button class="ml-4 flex h-16 w-[76px] items-center justify-center gap-[3px] rounded-md bg-[#ececf1]"><i class="size-[6px] rounded-full bg-[#353740]"></i><i class="size-[6px] rounded-full bg-[#353740]"></i><i class="size-[6px] rounded-full bg-[#353740]"></i></button>
      </div>

      <div class="flex gap-12 px-12 pt-12">
        <section class="w-[1712px]">
          <div class="relative h-[948px] overflow-hidden rounded-md border-2 border-[#c5c5d2] pl-[33px]">
            <div class="-mt-[2px] whitespace-nowrap text-[31px] leading-[48px]">
              <div><span class="tracking-[-1px]">7. </span>Pharynx discomfort</div>
              <div class="tracking-[-0.3px]">8. Hazy</div>
              <div class="tracking-[-0.4px]">9. Eye pain</div>
              <div class="tracking-[-0.2px]">10. Vision loss</div>
              <div class="mt-12 tracking-[0.3px]">Is cough a symptom of Asthma?</div>
              <div class="mt-12 tracking-[0.2px]">cough is a symptom of Asthma.</div>
              <div class="mt-12 tracking-[0.180px]">Patient: Recently, I am experiencing Shortness of breath and Expectoration</div>
              <div class="tracking-[-0.17px]">Doctor: Oh, do you have any Night sweats?</div>
              <div>Patient: Well not in my knowledge</div>
              <div class="tracking-[-0.05px]">Doctor: In that case, do you have any Fever?</div>
              <div class="tracking-[0.13px]">Patient: Not that I know of,</div>
              <div>Doctor: Is it? Then do<span class="bg-[#d9f2d6] pb-[2px] tracking-[-0.28px]"> you experience Cough?</span></div>
              <div class="tracking-[0.230px]"><span class="bg-[#d9f2d6] pb-[2px]">Patient: Yes, sometimes</span></div>
              <div class="tracking-[-0.04px]"><span class="bg-[#d9f2d6] pb-[2px]">Doctor: Is it? Then do you experience Pharynx discomfort?</span></div>
              <div class="tracking-[0.12px]"><span class="bg-[#d9f2d6] pb-[2px]">Patient: Yes most of the times.</span></div>
              <div class="tracking-[0.08px]">Doctor<span class="bg-[#d9f2d6] pb-[2px]">: I suggest that you should go for a complete medical checkup and get your Asthma diagnosed.</span></div>
            </div>
            <svg class="absolute right-[50px] top-[32px] h-[29px] w-5" viewBox="0 0 20 29" fill="none" stroke="#4a9f80" stroke-width="2.500"><rect x="5.500" y="1.200" width="9" height="18" rx="4.500"/><path d="M1.200 11v3.500a8.800 8.800 0 0 0 17.600 0V11M10 23v4M4 27.700h12"/></svg>
            <i class="absolute right-[86px] bottom-[38px] size-4 rounded-full bg-[#f4b13e]"></i>
          </div>
          <div class="mt-8 flex items-center">
            <button class="h-16 w-[143px] rounded-md bg-[#4a9f80] pb-1 pr-[7px] text-[28px] text-white">Submit</button>
            <button class="ml-4 flex h-16 w-[76px] items-center justify-center rounded-md bg-[#ececf1]"><svg class="size-[27px]" viewBox="0 0 27 27" fill="none" stroke="#353740" stroke-width="2.500"><path d="M2 1.500v8.500h8.500M2.500 9.500a11.500 11.500 0 1 1 1.500 10.500"/></svg></button>
            <button class="ml-4 flex h-16 w-[76px] items-center justify-center rounded-md bg-[#ececf1]"><svg class="h-[26px] w-[30px]" viewBox="0 0 30 26" fill="none" stroke="#353740" stroke-width="2.500"><path d="M28.500 2v8H20.500M1.500 24v-8H9.500M4.500 9A11.300 11.300 0 0 1 23 4.500l5 5M25.500 17A11.300 11.300 0 0 1 7 21.500l-5-5"/></svg></button>
            <svg class="ml-[40px] size-9" viewBox="0 0 36 36" fill="none" stroke="#353740" stroke-width="3"><path d="M5.500 17A14.300 14.300 0 1 1 10 28.500M1 13.500l4.500 5 5-5M20 9.500V18l6 4.500"/></svg>
            <svg class="ml-[69px] h-[27px] w-[26px]" viewBox="0 0 26 27" fill="none" stroke="#353740" stroke-width="2.300" stroke-linejoin="round"><path d="M18.500 15.500L14 25.500q-4-.5-4-4.500v-4H4q-3-.3-2.700-3L3 3.500q.5-2.200 3-2.200h12.500zM18.500 1.300H22q2.800.2 2.800 2.700v9q0 2.500-2.800 2.500h-3.500"/></svg>
            <svg class="ml-[58px] h-[27px] w-[26px] rotate-180" viewBox="0 0 26 27" fill="none" stroke="#353740" stroke-width="2.300" stroke-linejoin="round"><path d="M18.500 15.500L14 25.500q-4-.5-4-4.500v-4H4q-3-.3-2.700-3L3 3.500q.5-2.200 3-2.200h12.500zM18.500 1.300H22q2.800.2 2.800 2.700v9q0 2.500-2.800 2.500h-3.500"/></svg>
            <span class="ml-auto flex h-16 w-[84px] items-center justify-center rounded-[24px] bg-[#ececf1] text-[31px] tracking-[-0.9px] text-[#565869]">203</span>
          </div>
        </section>

        <!-- parameters -->
        <section class="-mt-[2px] w-[384px] text-[28px] leading-10">
          <div class="tracking-[-1.200px]">Mode</div>
          <div class="mt-[18px] flex h-16 rounded-md bg-[#f7f7f8]">
            <div class="flex w-32 items-center justify-center rounded-md bg-[#ececf1]"><svg class="h-7 w-[26px]" viewBox="0 0 26 28" fill="none" stroke="#353740" stroke-width="4.200" stroke-linecap="round"><path d="M2.500 2.200h21M2.500 10.200h21M2.500 18.200h1M12.500 18.200h1M22.500 18.200h1M2.500 26h1M12.500 26h1"/></svg></div>
            <div class="flex w-32 items-center justify-center"><svg class="h-7 w-[26px]" viewBox="0 0 26 28" fill="none" stroke="#acacbe" stroke-width="3.800" stroke-linecap="round"><path d="M13 2v15M5 11.500l8 7 8-7M2.500 26h1M12.500 26h1M22.500 26h1"/></svg></div>
            <div class="flex w-32 items-center justify-center"><svg class="h-7 w-7" viewBox="0 0 28 28" fill="none" stroke="#acacbe" stroke-width="4.200" stroke-linecap="round"><path d="M2.500 2.200h21M2.500 10.200h21M2.500 18.200h1M12.500 18.200h1M2.500 26h3M17 26l8.500-8"/></svg></div>
          </div>
          <div class="mt-[30px] tracking-[-1px]">Model</div>
          <div class="mt-[18px] flex h-[72px] items-center justify-between rounded-md border-2 border-[#c5c5d2] pl-[21px] pr-6"><span class="-mt-[3px] tracking-[-0.25px]">text-davinci-003</span><svg class="h-[14px] w-[26px] text-[#acacbe]"><use href="#down"/></svg></div>

          <div class="mt-[35px] flex justify-between pr-[12px]"><span class="tracking-[-0.35px]">Temperature</span><span class="tracking-[-0.3px]">0.7</span></div>
          <div class="relative mt-[21px] flex h-7 items-center"><div class="h-2 w-full rounded-full bg-[#ececf1]"><div class="h-2 rounded-full bg-[#c5c5d2]" style="width:70%"></div></div><i class="absolute size-7 -translate-x-1/2 rounded-full border-4 border-[#c5c5d2] bg-white" style="left:70%"></i></div>

          <div class="mt-[35px] flex justify-between pr-[12px]"><span class="tracking-[-0.12px]">Maximum length</span><span class="tracking-[-0.8px]">256</span></div>
          <div class="relative mt-[21px] flex h-7 items-center"><div class="h-2 w-full rounded-full bg-[#ececf1]"><div class="h-2 rounded-full bg-[#c5c5d2]" style="width:6.250%"></div></div><i class="absolute size-7 -translate-x-1/2 rounded-full border-4 border-[#c5c5d2] bg-white" style="left:6.250%"></i></div>

          <div class="mt-[30px] tracking-[-0.35px]">Stop sequences</div>
          <div class="mt-px text-[24px] leading-8 tracking-[-0.46px] text-[#8e8ea0]">Enter sequence and press Tab</div>
          <div class="mt-[13px] h-[76px] rounded-md border-2 border-[#c5c5d2]"></div>

          <div class="mt-[34px] flex justify-between pr-[13px]"><span class="tracking-[-1px]">Top P</span><span>1</span></div>
          <div class="relative mt-[22px] flex h-7 items-center"><div class="h-2 w-full rounded-full bg-[#c5c5d2]"></div><i class="absolute size-7 -translate-x-1/2 rounded-full border-4 border-[#c5c5d2] bg-white" style="left:100%"></i></div>

          <div class="mt-[34px] flex justify-between pr-[12px]"><span class="tracking-[-0.36px]">Frequency penalty</span><span>0</span></div>
          <div class="relative mt-[22px] flex h-7 items-center"><div class="h-2 w-full rounded-full bg-[#ececf1]"></div><i class="absolute size-7 -translate-x-1/2 rounded-full border-4 border-[#c5c5d2] bg-white" style="left:0%"></i></div>

          <div class="mt-[34px] flex justify-between pr-[12px]"><span class="tracking-[-0.38px]">Presence penalty</span><span>0</span></div>
          <div class="relative mt-[22px] flex h-7 items-center"><div class="h-2 w-full rounded-full bg-[#ececf1]"></div><i class="absolute size-7 -translate-x-1/2 rounded-full border-4 border-[#c5c5d2] bg-white" style="left:0%"></i></div>
        </section>
      </div>
    </main>
  </div>
</div>

<!-- dock -->
<div class="flex h-[138px] shrink-0 bg-linear-to-r from-[#060606] via-[#0b2106] via-60% to-[#050505] pl-[193px] pt-[2px]">
<div class="relative flex h-[126px] w-[2495px] gap-[26px] rounded-[38px] border-2 border-[#3c3e3a] bg-linear-to-r from-[#191a17] via-[#182c12] via-58% to-[#191b19] pl-4 pt-[17px] shadow-[0_0_90px_rgba(0,0,0,.26)] [&_svg]:overflow-visible">
  <svg class="absolute size-0"><defs>
    <linearGradient id="gGreen" x2="0" y2="1"><stop stop-color="#8bf183"/><stop offset="1" stop-color="#54bd45"/></linearGradient>
    <linearGradient id="gBlue" x2="0" y2="1"><stop stop-color="#3b6de8"/><stop offset="1" stop-color="#5cc0f8"/></linearGradient>
    <linearGradient id="gSky" x2="0" y2="1"><stop stop-color="#5ec3f7"/><stop offset="1" stop-color="#2f62e6"/></linearGradient>
    <linearGradient id="gStore" x2="0" y2="1"><stop stop-color="#53b6f0"/><stop offset="1" stop-color="#2650d0"/></linearGradient>
    <linearGradient id="gWhite" x2="0" y2="1"><stop stop-color="#fff"/><stop offset="1" stop-color="#e6e6e6"/></linearGradient>
    <linearGradient id="gSoft" x2="0" y2="1"><stop stop-color="#fff"/><stop offset="1" stop-color="#c3e6bd"/></linearGradient>
    <linearGradient id="gYellow" x2="0" y2="1"><stop stop-color="#fbdf6d"/><stop offset="1" stop-color="#f3c33b"/></linearGradient>
    <linearGradient id="gBrown" x2="0" y2="1"><stop stop-color="#b4925c"/><stop offset="1" stop-color="#9c6f43"/></linearGradient>
    <linearGradient id="gTele" x2="0" y2="1"><stop stop-color="#5fb3ea"/><stop offset="1" stop-color="#3a86c8"/></linearGradient>
    <linearGradient id="gMusic" x2="0" y2="1"><stop stop-color="#ec6375"/><stop offset="1" stop-color="#e6373e"/></linearGradient>
    <linearGradient id="gZoom" x2="0" y2="1"><stop stop-color="#5a94f8"/><stop offset="1" stop-color="#3c6bee"/></linearGradient>
    <linearGradient id="gNum" x2="0" y2="1"><stop stop-color="#93ee74"/><stop offset="1" stop-color="#55c341"/></linearGradient>
    <linearGradient id="gGear" x2="0" y2="1"><stop stop-color="#d3dbe1"/><stop offset="1" stop-color="#8f8f8f"/></linearGradient>
    <linearGradient id="gBin"><stop stop-color="#6d7276"/><stop offset=".4" stop-color="#8c9196"/><stop offset="1" stop-color="#55595d"/></linearGradient>
    <clipPath id="tile"><rect width="78" height="78" rx="18"/></clipPath>
    <clipPath id="rings"><path d="M0 0h17v20l-6 2-2 4H0z"/></clipPath>
  </defs></svg>

  <!-- Finder -->
  <div class="flex w-[78px] flex-col items-center gap-[17px]"><svg class="size-[78px] shrink-0" viewBox="0 0 78 78"><g clip-path="url(#tile)"><path d="M0 0h78v78H0z" fill="url(#gSky)"/><path d="M43 0q-10 22-10 46h11q-1 18 4 32h30V0z" fill="#e3e7ee"/></g><path d="M20 23v6M57.500 23v6" stroke="#1c2b45" stroke-width="4" stroke-linecap="round"/><path d="M15 52q24 20 48 0" fill="none" stroke="#1a1f2a" stroke-width="2.600" stroke-linecap="round"/></svg><i class="size-2 rounded-full bg-[#9a9b99]"></i></div>
  <!-- Notes -->
  <div class="flex w-[78px] flex-col items-center gap-[17px]"><svg class="size-[78px] shrink-0" viewBox="0 0 78 78"><g clip-path="url(#tile)"><path d="M0 0h78v78H0z" fill="#f3f2ee"/><path d="M0 0h78v20H0z" fill="url(#gYellow)"/><path d="M0 20.500h78" stroke="#a9a294"/><path d="M2 24h74" stroke="#b5b3ae" stroke-width="2" stroke-dasharray="1.500 1.800"/><path d="M0 39h78M0 58.500h78" stroke="#d0cfcb" stroke-width="1.500"/></g></svg><i class="size-2 rounded-full bg-[#9a9b99]"></i></div>
  <!-- Launchpad -->
  <svg class="size-[78px] shrink-0" viewBox="0 0 78 78"><rect width="78" height="78" rx="18" fill="#b1b2b4"/><g><rect x="13" y="13" width="15" height="14" rx="3.500" fill="#79e05a"/><rect x="32" y="13" width="15" height="14" rx="3.500" fill="#f1bb3c"/><rect x="51" y="13" width="15" height="14" rx="3.500" fill="#e58b33"/><rect x="13" y="32" width="15" height="14" rx="3.500" fill="#c9342a"/><rect x="32" y="32" width="15" height="14" rx="3.500" fill="#98a1a8"/><rect x="51" y="32" width="15" height="14" rx="3.500" fill="#e84b5c"/><rect x="13" y="51" width="15" height="14" rx="3.500" fill="#8f46c9"/><rect x="32" y="51" width="15" height="14" rx="3.500" fill="#3187f0"/><rect x="51" y="51" width="15" height="14" rx="3.500" fill="#5cc9a9"/></g></svg>
  <!-- Messages -->
  <svg class="size-[78px] shrink-0" viewBox="0 0 78 78"><rect width="78" height="78" rx="18" fill="url(#gGreen)"/><path d="M39 13.500c16 0 28.500 10.500 28.500 23.500S55 60.500 39 60.500q-5 0-9-1.300-4 4-9.500 5 3.500-4 3-8Q10.500 49 10.500 37C10.500 24 23 13.500 39 13.500z" fill="url(#gSoft)"/></svg>
  <!-- Mail -->
  <svg class="size-[78px] shrink-0" viewBox="0 0 78 78"><rect width="78" height="78" rx="18" fill="url(#gBlue)"/><rect x="12" y="21.500" width="54" height="35" rx="3.500" fill="url(#gWhite)"/><path d="M13 23l21 22q5 4 10 0l21-22M13 56l17-16M65 56L48 40" fill="none" stroke="#9c9c9c" stroke-width="1.600"/></svg>
  <!-- Maps -->
  <svg class="size-[78px] shrink-0" viewBox="0 0 78 78"><g clip-path="url(#tile)"><path d="M0 0h78v78H0z" fill="#8dd86c"/><path d="M78 44Q34 34 36 0h14q2 24 28 30z" fill="#f3f2ee"/><path d="M50 0h28v26Q54 22 50 0z" fill="#a8e87c"/><path d="M0 0h12v78H0z" fill="#f0efe9"/><path d="M0 38l12 12v28H0z" fill="#f3c4d2"/><path d="M28 55h50v23H28z" fill="#dedbd2"/><path d="M-8 9l92 76" stroke="#f2a93c" stroke-width="17"/><path d="M-8 9l92 76" stroke="#f8d04b" stroke-width="13"/><path d="M11 0h16v78H11z" fill="#fafafa"/><path d="M14.500 0h9.500v40h-9.500z" fill="#3478e0"/></g><circle cx="19.500" cy="46.500" r="14" fill="#fff"/><circle cx="19.500" cy="46.500" r="8.500" fill="#3377e4"/><path d="M46 51q13 4 26-1 4 20-13 23.500Q42 70 46 51z" fill="#2a6cc8" stroke="#fff" stroke-width="1.800"/><path d="M47 52q12 3 24-1l.7 5H46.500z" fill="#d33a32"/><text x="59" y="67" font-size="10" font-weight="700" fill="#fff" text-anchor="middle">280</text></svg>
  <!-- FaceTime -->
  <svg class="size-[78px] shrink-0" viewBox="0 0 78 78"><rect width="78" height="78" rx="18" fill="url(#gGreen)"/><rect x="12" y="22" width="38" height="34" rx="8" fill="url(#gSoft)"/><path d="M52 36l11-11q3-2 3 1v26q0 3-3 1L52 42z" fill="url(#gSoft)"/></svg>
  <!-- Calendar -->
  <div class="flex size-[78px] shrink-0 flex-col items-center overflow-hidden rounded-[18px] bg-[#f7f7f6]"><span class="flex h-6 w-full shrink-0 items-center justify-center bg-[#e25d52] text-[15px] font-semibold text-white">DEC</span><span class="text-[48px] font-light leading-[50px] text-[#1d1d1d]">1</span></div>
  <!-- Contacts -->
  <svg class="size-[78px] shrink-0" viewBox="0 0 78 78"><rect x="60" y="9" width="21" height="18" rx="5" fill="#c9c9c9"/><rect x="60" y="28" width="21" height="13" rx="3" fill="#6bbcf2"/><rect x="60" y="42" width="21" height="13" rx="3" fill="#ef9a38"/><rect x="60" y="55" width="21" height="14" rx="5" fill="#66cf5c"/><rect width="78" height="78" rx="18" fill="url(#gBrown)"/><path d="M6 4v70" stroke="#8a6439" stroke-width="1.500"/><circle cx="41" cy="39" r="24" fill="none" stroke="#85633a" stroke-width="2"/><circle cx="41" cy="34" r="8.500" fill="#85633a" fill-opacity=".65"/><path d="M23 55q4-9 18-9t18 9q-7 8-18 8t-18-8z" fill="#85633a" fill-opacity=".65"/></svg>
  <!-- Reminders -->
  <div class="flex w-[78px] flex-col items-center gap-[17px]"><svg class="size-[78px] shrink-0" viewBox="0 0 78 78"><rect width="78" height="78" rx="18" fill="#fafaf9"/><g stroke-width="1.500" fill="none"><circle cx="16" cy="19.500" r="6" stroke="#3478f0"/><circle cx="16" cy="39" r="6" stroke="#e2463b"/><circle cx="16" cy="58.500" r="6" stroke="#e8942e"/></g><circle cx="16" cy="19.500" r="4" fill="#3478f0"/><circle cx="16" cy="39" r="4" fill="#e2463b"/><circle cx="16" cy="58.500" r="4" fill="#e8942e"/><path d="M30 19.500h40M30 39h40M30 58.500h40" stroke="#b4b4b4" stroke-width="1.800"/></svg><i class="size-2 rounded-full bg-[#98a693]"></i></div>
  <!-- Telegram -->
  <svg class="size-[78px] shrink-0" viewBox="0 0 78 78"><rect width="78" height="78" rx="18" fill="url(#gWhite)"/><circle cx="39" cy="39" r="33.500" fill="url(#gTele)"/><path d="M19 39l33-13.500q4-1 3.300 3L50 53.500q-1 3-4 1L31 44l18-14-23 13z" fill="#fff"/></svg>
  <!-- Chrome -->
  <div class="flex w-[78px] flex-col items-center gap-[17px]"><svg class="size-[78px] shrink-0" viewBox="0 0 78 78"><rect width="78" height="78" rx="18" fill="#f4f4f4"/><path d="M39 5.500a33.500 33.500 0 0 1 29 16.750H39L24.500 47.400 10 22.250A33.500 33.500 0 0 1 39 5.500z" fill="#d84f3e"/><path d="M68 22.250A33.500 33.500 0 0 1 39 72.500l14.500-25.100V30.600L39 22.250z" fill="#f3be42"/><path d="M39 72.500A33.500 33.500 0 0 1 10 22.250l14.500 25.150L39 55.750l14.500-8.350z" fill="#4b9e54"/><circle cx="39" cy="38.500" r="16" fill="#fff"/><circle cx="39" cy="38.500" r="12.500" fill="#3d75e6"/></svg><i class="size-2 rounded-full bg-[#98a693]"></i></div>
  <!-- WhatsApp -->
  <div class="flex w-[78px] flex-col items-center gap-[17px]"><svg class="size-[78px] shrink-0" viewBox="0 0 78 78"><rect width="78" height="78" rx="18" fill="url(#gGreen)"/><path d="M39.500 11.500a27.500 27.500 0 1 1-13.500 51.500l-14 3.500 4-13.500a27.500 27.500 0 0 1 23.500-41.500z" fill="none" stroke="#fff" stroke-width="5"/><path d="M26 28q3-5 6.500-3l3.500 8q0 2-3 5 4 8 11.500 11 3-4 4.500-4l7 4q1.500 6-5 8-7 2-16-5.500T24.500 35q-.5-4 1.500-7z" fill="#fff"/></svg><i class="size-2 rounded-full bg-[#98a693]"></i></div>
  <!-- Photos -->
  <svg class="size-[78px] shrink-0" viewBox="0 0 78 78"><rect width="78" height="78" rx="18" fill="#fcfcfc"/><g fill-opacity=".82"><rect x="29" y="5" width="20" height="33" rx="10" fill="#f3a037"/><rect x="29" y="5" width="20" height="33" rx="10" fill="#ecdf3c" transform="rotate(45 39 39)"/><rect x="29" y="5" width="20" height="33" rx="10" fill="#a9d04d" transform="rotate(90 39 39)"/><rect x="29" y="5" width="20" height="33" rx="10" fill="#62b580" transform="rotate(135 39 39)"/><rect x="29" y="5" width="20" height="33" rx="10" fill="#5f9fe0" transform="rotate(180 39 39)"/><rect x="29" y="5" width="20" height="33" rx="10" fill="#8573c4" transform="rotate(225 39 39)"/><rect x="29" y="5" width="20" height="33" rx="10" fill="#b771b4" transform="rotate(270 39 39)"/><rect x="29" y="5" width="20" height="33" rx="10" fill="#e8564a" transform="rotate(315 39 39)"/></g></svg>
  <!-- News -->
  <svg class="size-[78px] shrink-0" viewBox="0 0 78 78"><rect width="78" height="78" rx="18" fill="#fff"/><path d="M16 19q0-2.500 2.500-2.500H29L62 57v2.500q0 2-2.500 2H49L16 22zM42 16.500h17.500q2.500 0 2.500 2.500v18zM16 40l21 21.500H18.500q-2.500 0-2.500-2.500z" fill="#e8455c"/></svg>
  <!-- Numbers -->
  <div class="flex w-[78px] flex-col items-center gap-[17px]"><svg class="size-[78px] shrink-0" viewBox="0 0 78 78"><rect width="78" height="78" rx="18" fill="url(#gNum)"/><g fill="#f4f6f4"><rect x="15" y="50.500" width="9" height="16" rx="2"/><rect x="28" y="36.500" width="9" height="30" rx="2"/><rect x="41.500" y="11.500" width="9" height="55" rx="2"/><rect x="54.500" y="26" width="9" height="40.500" rx="2"/></g></svg><i class="size-2 rounded-full bg-[#98a693]"></i></div>
  <!-- App Store -->
  <svg class="size-[78px] shrink-0" viewBox="0 0 78 78"><rect width="78" height="78" rx="18" fill="url(#gStore)"/><g stroke="#fff" stroke-width="6" stroke-linecap="round"><path d="M43 17.500L24.500 48M36 17.500L61 59M14 48h49M20.500 57l-2.500 4"/></g></svg>
  <!-- System Preferences -->
  <div class="relative flex w-[78px] flex-col items-center gap-[17px]"><svg class="size-[78px] shrink-0" viewBox="0 0 78 78"><rect width="78" height="78" rx="18" fill="url(#gGear)"/><circle cx="39" cy="39" r="34" fill="#2c2c2c"/><circle cx="39" cy="39" r="31" fill="none" stroke="#9a9a9a" stroke-width="4" stroke-dasharray="2 1.600"/><circle cx="39" cy="39" r="26.500" fill="none" stroke="#b5b5b5" stroke-width="4"/><circle cx="39" cy="39" r="17" fill="none" stroke="#777" stroke-width="5" stroke-dasharray="1.800 1.400"/><path d="M39 39h25M39 39L26.500 17M39 39L26.500 61" stroke="#a9a9a9" stroke-width="4"/><circle cx="39" cy="39" r="6" fill="#8e8e8e"/></svg><i class="size-2 rounded-full bg-[#98a693]"></i>
    <span class="absolute -right-[11px] -top-[9px] flex size-9 items-center justify-center rounded-full bg-[#e04e3f] text-[20px] text-white">1</span></div>
  <!-- Acrobat -->
  <div class="flex w-[78px] flex-col items-center gap-[17px]"><svg class="size-[78px] shrink-0" viewBox="0 0 80 80"><rect width="80" height="80" rx="18" fill="#a32417"/><use href="#acro"/></svg><i class="size-2 rounded-full bg-[#98a693]"></i></div>

  <i class="-mt-[3px] ml-[10px] mr-2 h-[94px] w-[2px] bg-[#4b5149]"></i>

  <!-- PowerPoint -->
  <div class="flex w-[78px] flex-col items-center gap-[17px]"><svg class="size-[78px] shrink-0" viewBox="0 0 78 78"><rect width="78" height="78" rx="18" fill="#fff"/><circle cx="41" cy="39" r="26" fill="#c8593c"/><path d="M41 13a26 26 0 0 1 26 26H41z" fill="#ee9273"/><path d="M41 13a26 26 0 0 0-26 26h26z" fill="#dd6c4b"/><rect x="9" y="24" width="31" height="29.500" rx="3" fill="#b83f20"/><text x="24" y="46.500" font-size="22" font-weight="700" fill="#fff" text-anchor="middle">P</text></svg><i class="size-2 rounded-full bg-[#98a693]"></i></div>
  <!-- Zoom -->
  <svg class="-mx-[4px] -mt-[4px] size-[86px] shrink-0" viewBox="0 0 86 86"><rect width="86" height="86" rx="27" fill="url(#gZoom)"/><path d="M17 31q0-2.500 2.500-2.500H47q8 0 8 8V55q0 2.500-2.500 2.500H25q-8 0-8-8zM57.500 38.500L66 30q3-2 3 1v24.500q0 3-3 1l-8.500-8.500z" fill="#fff"/></svg>
  <!-- Music -->
  <div class="flex w-[78px] flex-col items-center gap-[17px]"><svg class="size-[78px] shrink-0" viewBox="0 0 78 78"><rect width="78" height="78" rx="18" fill="url(#gMusic)"/><path d="M28 58V20.500q0-2 2-2.500l25-5.500q2 0 2 2V52" fill="none" stroke="#fff" stroke-width="4"/><path d="M28 18l29-6v9l-29 6z" fill="#fff"/><ellipse cx="22.500" cy="58" rx="7.500" ry="6.500" fill="#fff"/><ellipse cx="50" cy="53" rx="7.500" ry="6.500" fill="#fff"/></svg><i class="size-2 rounded-full bg-[#98a693]"></i></div>

  <i class="-mt-[3px] ml-3 mr-[5px] h-[94px] w-[2px] bg-[#4b5149]"></i>

  <!-- Trash -->
  <svg class="-mt-[8px] h-[90px] w-[78px] shrink-0" viewBox="0 0 78 90"><path d="M5 13l8 68q1 8 26 8t26-8l8-68z" fill="url(#gBin)"/><ellipse cx="39" cy="13" rx="34" ry="8" fill="#4d5155"/><path d="M9 14l6-9 8 3 4-7 9 6 6-3 5 2 6-6 6 7 8 1 2 7-12 4-8-3-8 5-9-4-8 3z" fill="#e9e9e7"/><path d="M24 14l6-7 6 9zM48 8l7 2-3 8zM15 10l4 4" fill="#4e7fa8" stroke="#6b5148" stroke-width="1.500"/><path d="M5 13q34 18 68 0" fill="none" stroke="#a5aaae" stroke-width="1.500"/></svg>
</div>
</div>
</body>
</html>
